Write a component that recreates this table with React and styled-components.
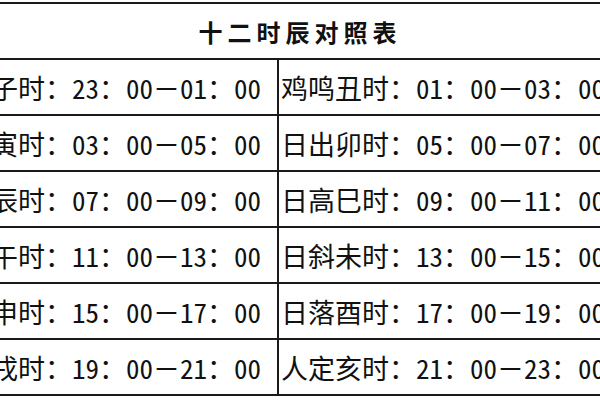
import styled, { createGlobalStyle } from "styled-components"

const GlobalStyle = createGlobalStyle`
	html, body {
		margin: 0;
		padding: 0;
		background: #ffffff;
	}
	body {
		font-family: "Noto Sans CJK SC", "Noto Sans", sans-serif;
		color: #111111;
		overflow: hidden;
	}
`

const Table = styled.div`
	width: 600px;
	margin-top: 2px;
	border-top: 2px solid #1a1a1a;
	overflow: hidden;
`
const Title = styled.div`
	height: 54px;
	display: flex;
	align-items: center;
	justify-content: center;
	border-bottom: 2px solid #1a1a1a;
	font-size: 24px;
	font-weight: 700;
	letter-spacing: 5px;
`
const Row = styled.div`
	display: grid;
	grid-template-columns: 279px 1fr;
	height: 54px;
	border-bottom: 2px solid #1a1a1a;
`
const Cell = styled.div`
	display: flex;
	align-items: center;
	justify-content: ${(p) => (p.$side === "left" ? "flex-end" : "flex-start")};
	padding: ${(p) => (p.$side === "left" ? "0 16px 0 0" : "0 0 0 2px")};
	border-right: ${(p) => (p.$side === "left" ? "2px solid #1a1a1a" : "none")};
	overflow: hidden;
	white-space: nowrap;
	font-size: 27px;
	font-weight: 400;
`
const Num = styled.span`
	font-feature-settings: "hwid" 1;
`

const rows = [
	["夜半子时", "23", "01", "鸡鸣丑时", "01", "03"],
	["平旦寅时", "03", "05", "日出卯时", "05", "07"],
	["食时辰时", "07", "09", "日高巳时", "09", "11"],
	["日中午时", "11", "13", "日斜未时", "13", "15"],
	["晡时申时", "15", "17", "日落酉时", "17", "19"],
	["黄昏戌时", "19", "21", "人定亥时", "21", "23"],
]

const Period = ({ name, from, to }) => (
	<span>
		{name}：<Num>{from}</Num>：<Num>00</Num>－<Num>{to}</Num>：<Num>00</Num>
	</span>
)

const App = () => {
	return (
		<>
			<GlobalStyle />
			<Table>
				<Title>十二时辰对照表</Title>
				{rows.map((r) => (
					<Row key={r[0]}>
						<Cell $side='left'>
							<Period name={r[0]} from={r[1]} to={r[2]} />
						</Cell>
						<Cell $side='right'>
							<Period name={r[3]} from={r[4]} to={r[5]} />
						</Cell>
					</Row>
				))}
			</Table>
		</>
	)
}

export default App
